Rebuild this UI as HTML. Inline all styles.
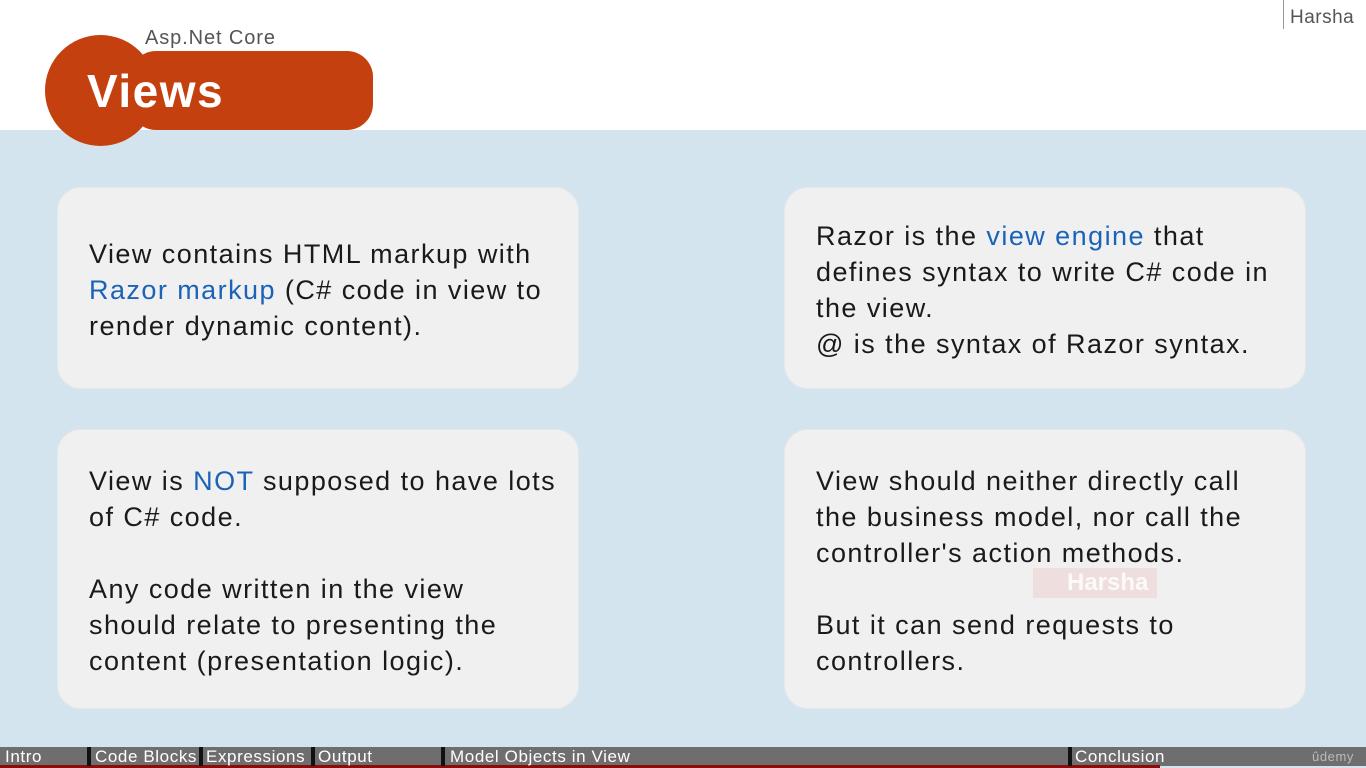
<!DOCTYPE html>
<html><head><meta charset="utf-8"><style>
*{margin:0;padding:0;box-sizing:border-box}
body{width:1366px;height:768px;position:relative;overflow:hidden;background:#d4e4ee;font-family:"Liberation Sans","DejaVu Sans",sans-serif}
.hdr{position:absolute;left:0;top:0;width:1366px;height:130px;background:#fff}
.circ{position:absolute;left:45px;top:35px;width:111px;height:111px;border-radius:50%;background:#c4410f}
.pill{position:absolute;left:130px;top:51px;width:243px;height:79px;border-radius:26px;background:#c4410f}
.title{position:absolute;left:87px;top:63px;font-size:46px;font-weight:bold;color:#fff;line-height:56px;letter-spacing:1.5px}
.sub{position:absolute;left:145px;top:26px;font-size:20px;color:#555;line-height:24px;letter-spacing:0.9px}
.hv{position:absolute;left:1283px;top:0;width:1px;height:29px;background:#999}
.hn{position:absolute;left:1290px;top:7px;font-size:19px;color:#555;letter-spacing:0.5px}
.card{position:absolute;background:#f0f0f0;border-radius:24px;border:1px solid #e4e8ea}
.t{position:absolute;font-size:27px;line-height:36px;color:#1a1a1a;letter-spacing:1.45px;white-space:nowrap}
.b{color:#1a63b8}
.bar{position:absolute;left:0;top:747px;width:1366px;height:19px;background:#6e6e6e}
.red{position:absolute;left:0;top:765px;width:1160px;height:3px;background:#8a0c0c}
.lab{position:absolute;top:747px;font-size:17px;line-height:20px;color:#fff;letter-spacing:0.6px}
.sep{position:absolute;top:747px;width:4px;height:19px;background:#111}
</style></head><body>
<div class="hdr"></div>
<div class="circ"></div><div class="pill"></div>
<div class="title">Views</div>
<div class="sub">Asp.Net Core</div>
<div class="hv"></div><div class="hn">Harsha</div>

<div class="card" style="left:57px;top:187px;width:522px;height:202px"></div>
<div class="card" style="left:784px;top:187px;width:522px;height:202px"></div>
<div class="card" style="left:57px;top:429px;width:522px;height:280px"></div>
<div class="card" style="left:784px;top:429px;width:522px;height:280px"></div>

<div class="t" style="left:89px;top:236px">View contains HTML markup with<br><span class="b">Razor markup</span> (C# code in view to<br>render dynamic content).</div>
<div class="t" style="left:816px;top:218px">Razor is the <span class="b">view engine</span> that<br>defines syntax to write C# code in<br>the view.<br>@ is the syntax of Razor syntax.</div>
<div class="t" style="left:89px;top:463px">View is <span class="b">NOT</span> supposed to have lots<br>of C# code.<br><br>Any code written in the view<br>should relate to presenting the<br>content (presentation logic).</div>
<div class="t" style="left:816px;top:463px">View should neither directly call<br>the business model, nor call the<br>controller's action methods.<br><br>But it can send requests to<br>controllers.</div>
<div style="position:absolute;left:1033px;top:568px;width:124px;height:30px;background:rgba(230,150,150,0.2);color:rgba(255,255,255,0.8);font-weight:bold;font-size:24px;line-height:30px;padding-left:34px">Harsha</div>

<div class="bar"></div><div class="red"></div>
<div class="sep" style="left:87px"></div><div class="sep" style="left:199px"></div><div class="sep" style="left:311px"></div><div class="sep" style="left:441px"></div><div class="sep" style="left:1068px"></div>
<div class="lab" style="left:5px">Intro</div>
<div class="lab" style="left:95px">Code Blocks</div>
<div class="lab" style="left:206px">Expressions</div>
<div class="lab" style="left:318px">Output</div>
<div class="lab" style="left:450px">Model Objects in View</div>
<div class="lab" style="left:1075px">Conclusion</div>
<div class="lab" style="left:1312px;font-size:13px;color:#bbb">ûdemy</div>
</body></html>
